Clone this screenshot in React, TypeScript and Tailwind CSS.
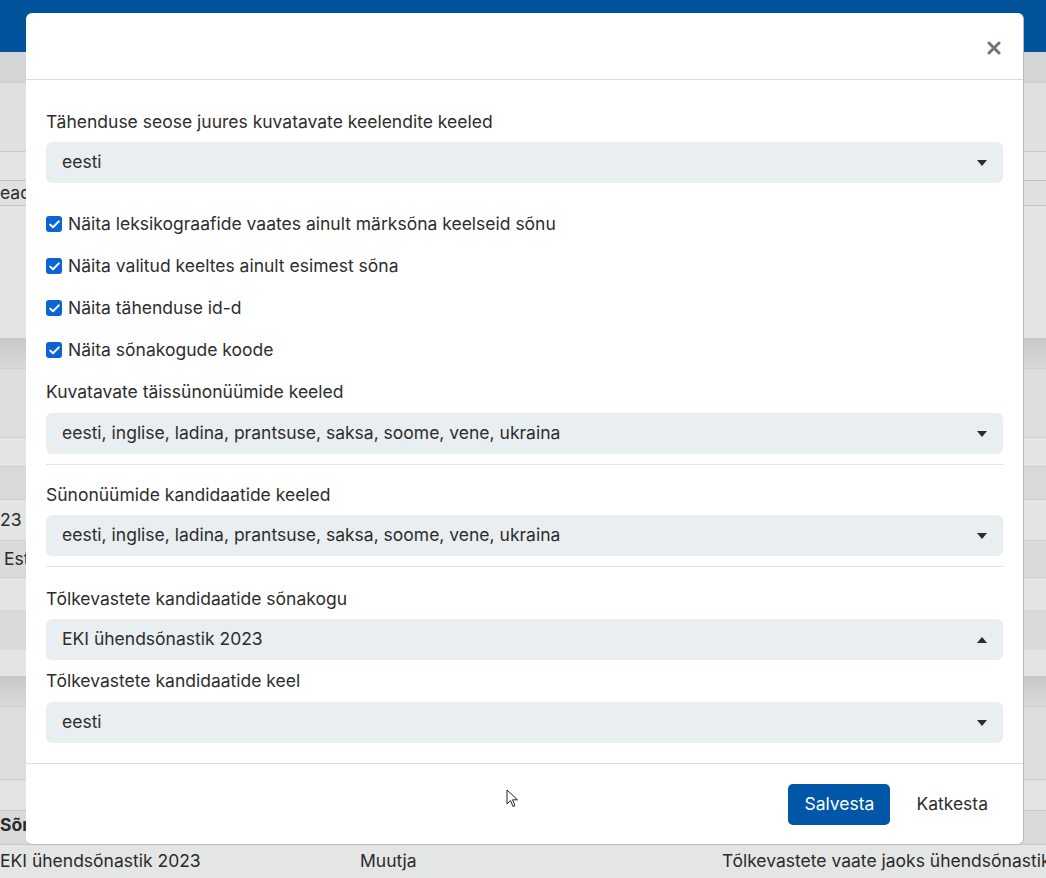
import React from "react";

const font = { fontFamily: "Inter, 'Noto Sans', sans-serif" };

const Caret = ({ up = false }: { up?: boolean }) => (
  <svg width="10" height="6" viewBox="0 0 10 6" className="shrink-0">
    {up ? <path d="M0 6 L5 0 L10 6 Z" fill="#2b2b2b" /> : <path d="M0 0 L10 0 L5 6 Z" fill="#2b2b2b" />}
  </svg>
);

const Select = ({ value, up = false }: { value: string; up?: boolean }) => (
  <div className="flex items-center justify-between h-[41px] rounded-[6px] bg-[#e9eef1] pl-4 pr-[16px] text-[#2d2d2d]">
    <span>{value}</span>
    <Caret up={up} />
  </div>
);

const Check = ({ label }: { label: string }) => (
  <label className="flex items-center h-6 gap-[6px] text-[#2d2d2d]">
    <span className="flex items-center justify-center w-[16px] h-[16px] rounded-[3px] bg-[#0b63d6]">
      <svg width="11" height="9" viewBox="0 0 11 9">
        <path d="M1.2 4.6 L4 7.3 L9.8 1.4" stroke="white" strokeWidth="2" fill="none" strokeLinecap="round" strokeLinejoin="round" />
      </svg>
    </span>
    <span>{label}</span>
  </label>
);

const Background = () => (
  <div className="flex flex-col text-[17.5px] text-[#2b2b2b]">
    <div className="h-[52px] bg-[#00529b]" />
    <div className="h-[30px] bg-[#d3d5d6]" />
    <div className="h-[70px] bg-[#dfe0e0] border-y border-[#c9caca]" />
    <div className="h-[28px] bg-[#e3e4e4]" />
    <div className="h-[26px] bg-[#dfe0e0] border-y border-[#c3c4c4] leading-[24px]">ead</div>
    <div className="h-[132px] bg-[#e3e4e4]" />
    <div className="h-[30px] bg-gradient-to-b from-[#c6c8c9] to-[#d7d9da]" />
    <div className="h-[70px] bg-[#dcdddd] border-y border-[#cdcece]" />
    <div className="h-[28px] bg-[#e3e4e4]" />
    <div className="h-[34px] bg-[#d8d9d9] border-y border-[#cdcece]" />
    <div className="h-[40px] bg-[#e3e4e4] leading-[40px]">23</div>
    <div className="h-[38px] bg-[#d9dada] border-y border-[#cdcece] leading-[36px] pl-[4px]">Est</div>
    <div className="h-[32px] bg-[#e3e4e4]" />
    <div className="h-[40px] bg-[#d8d9d9]" />
    <div className="h-[26px] bg-[#e3e4e4]" />
    <div className="h-[30px] bg-gradient-to-b from-[#c6c8c9] to-[#d7d9da]" />
    <div className="h-[74px] bg-[#dcdddd] border-y border-[#cdcece]" />
    <div className="h-[30px] bg-[#e3e4e4]" />
    <div className="h-[35px] bg-[#d8d9d9] border-y border-[#c9caca] font-bold leading-[28px]">Sõnakogu</div>
    <div className="h-[33px] bg-[#e4e5e5] flex items-center whitespace-nowrap">
      <span className="w-[360px] shrink-0">EKI ühendsõnastik 2023</span>
      <span className="w-[362px] shrink-0">Muutja</span>
      <span className="shrink-0">Tõlkevastete vaate jaoks ühendsõnastik</span>
    </div>
  </div>
);

const Cursor = () => (
  <svg width="14" height="20" viewBox="0 0 14 20" className="absolute left-[506px] top-[789px]">
    <path d="M1 1 L1 15 L4.5 11.5 L7 17.5 L9 16.7 L6.6 10.8 L11.5 10.8 Z" fill="white" stroke="#222" strokeWidth="1" strokeLinejoin="round" />
  </svg>
);

export default function App() {
  return (
    <div className="relative w-[1046px] h-[878px] overflow-hidden bg-[#e4e5e5]" style={font}>
      <Background />

      <div className="absolute left-[26px] top-[13px] w-[998px] h-[832px] bg-white rounded-[6px] flex flex-col text-[17.5px] text-[#2d2d2d] border-r border-b border-[#b9baba]">
        <div className="h-[67px] flex items-center justify-end pr-[22px] border-b border-[#d2dde4] shrink-0">
          <svg width="14" height="14" viewBox="0 0 14 14" className="mt-[4px]">
            <path d="M2 2 L12 12 M12 2 L2 12" stroke="#6f757a" strokeWidth="3" strokeLinecap="round" />
          </svg>
        </div>

        <div className="flex flex-col px-5 pt-[30px] pb-5 border-b border-[#d9dee2]">
          <div className="leading-6">Tähenduse seose juures kuvatavate keelendite keeled</div>
          <div className="mt-2">
            <Select value="eesti" />
          </div>

          <div className="flex flex-col gap-[18px] mt-[29px]">
            <Check label="Näita leksikograafide vaates ainult märksõna keelseid sõnu" />
            <Check label="Näita valitud keeltes ainult esimest sõna" />
            <Check label="Näita tähenduse id-d" />
            <Check label="Näita sõnakogude koode" />
          </div>

          <div className="leading-6 mt-[18px]">Kuvatavate täissünonüümide keeled</div>
          <div className="mt-[9px]">
            <Select value="eesti, inglise, ladina, prantsuse, saksa, soome, vene, ukraina" />
          </div>
          <div className="mt-[10px] border-t border-[#e2e4e6]" />

          <div className="leading-6 mt-[18px]">Sünonüümide kandidaatide keeled</div>
          <div className="mt-[8px]">
            <Select value="eesti, inglise, ladina, prantsuse, saksa, soome, vene, ukraina" />
          </div>
          <div className="mt-[10px] border-t border-[#e2e4e6]" />

          <div className="leading-6 mt-[20px]">Tõlkevastete kandidaatide sõnakogu</div>
          <div className="mt-2">
            <Select value="EKI ühendsõnastik 2023" up />
          </div>
          <div className="leading-6 mt-[9px]">Tõlkevastete kandidaatide keel</div>
          <div className="mt-[9px]">
            <Select value="eesti" />
          </div>
        </div>

        <div className="flex-1 flex items-center justify-end gap-[13px] pr-[22px]">
          <button className="h-[41px] w-[102px] rounded-[5px] bg-[#0057a8] text-white text-[17.5px]">Salvesta</button>
          <button className="h-[41px] px-[13px] text-[#2d2d2d] text-[17.5px]">Katkesta</button>
        </div>
      </div>

      <Cursor />
    </div>
  );
}
